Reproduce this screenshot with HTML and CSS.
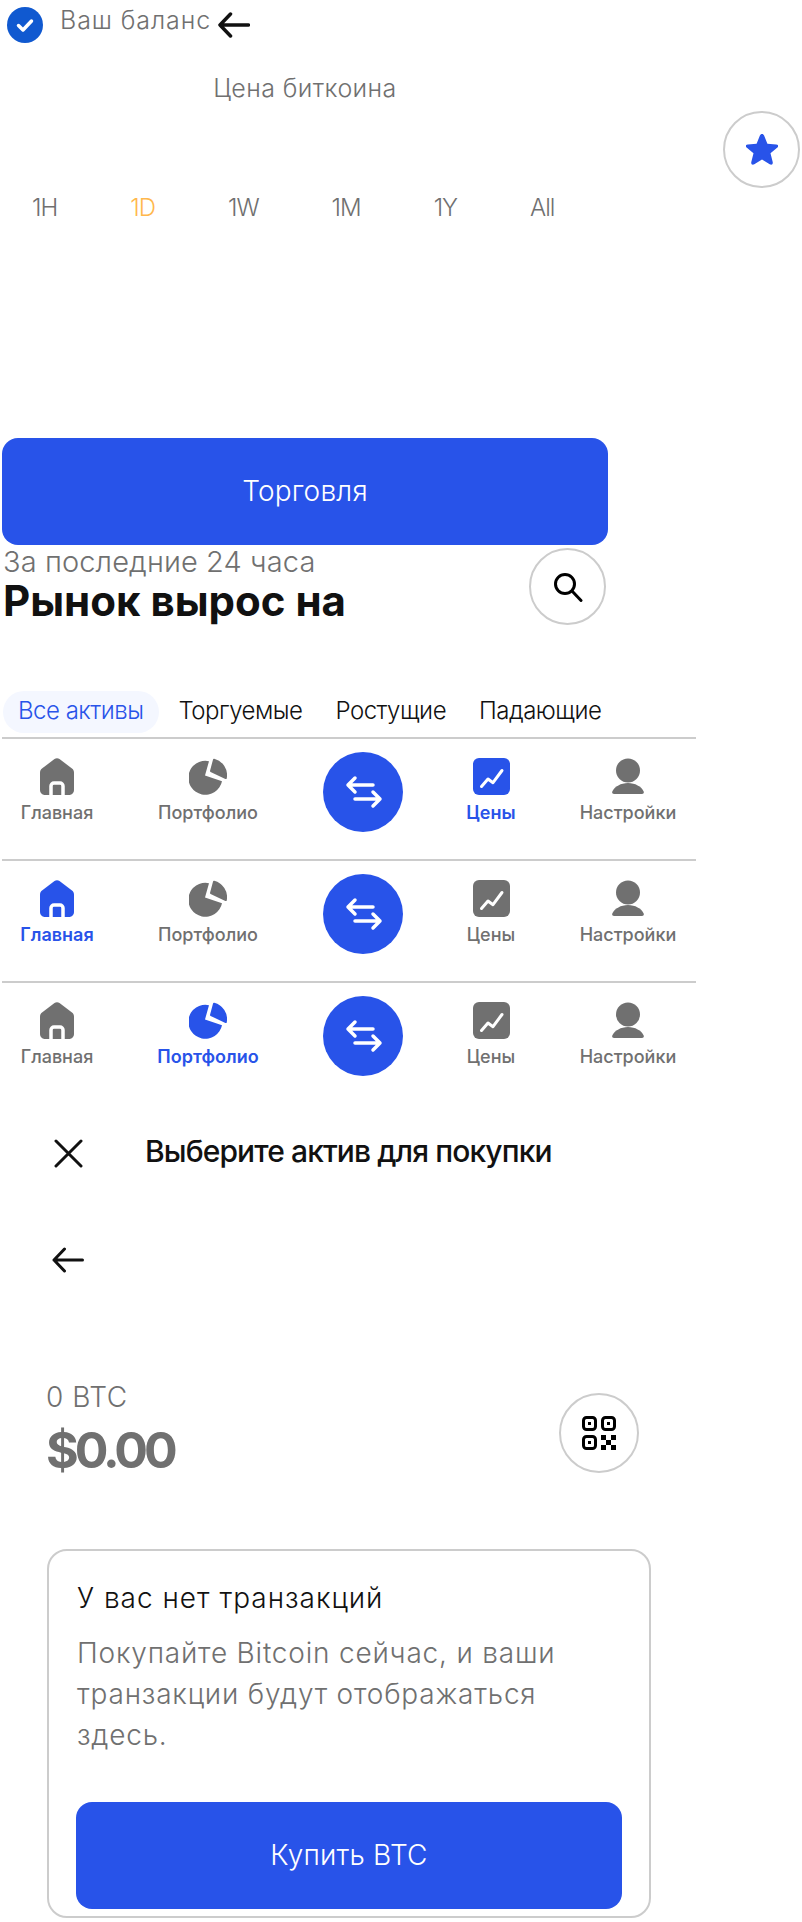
FILE: index.html
```html
<!DOCTYPE html>
<html lang="ru">

<head>
    <meta charset="UTF-8">
    <title>Цена биткоина</title>
    <link rel="stylesheet" href="styles.css">
</head>

<body>
    <svg class="sprite" width="0" height="0">
        <symbol id="i-home" viewBox="0 0 34 37">
            <path fill="currentColor" d="M14.5 1 2 10.5C.7 11.5 0 13 0 14.6V32c0 2.800 2.200 5 5 5h24c2.800 0 5-2.200 5-5V14.600c0-1.600-.7-3.100-2-4.100L19.500 1c-1.500-1.100-3.500-1.100-5 0z"/>
            <path fill="none" stroke="#fff" stroke-width="3.500" d="M11 37V28c0-1.700 1.300-3 3-3h6c1.700 0 3 1.300 3 3v9"/>
        </symbol>
        <symbol id="i-pie" viewBox="0 0 38 36">
            <path fill="currentColor" d="M20 2.700 16 17l17 5.700A17 17 0 1 1 20 2.700z"/>
            <path fill="currentColor" stroke="currentColor" stroke-width="2" stroke-linejoin="round" d="M22 12.500 25 1.200A16 16 0 0 1 36.800 19.500z"/>
        </symbol>
        <symbol id="i-chart" viewBox="0 0 37 37">
            <rect width="37" height="37" rx="6" fill="currentColor"/>
            <path fill="none" stroke="#fff" stroke-width="3" stroke-linecap="round" stroke-linejoin="round" d="M8.500 28.500 15 21l5 3.700L29 12.500"/>
        </symbol>
        <symbol id="i-user" viewBox="0 0 32 36">
            <circle cx="16" cy="12" r="12" fill="currentColor"/>
            <path fill="currentColor" d="M16 24.500c-7 0-13.500 3.500-15.700 8.500-.5 1.300.3 2.500 1.700 2.500h28c1.400 0 2.200-1.200 1.700-2.500C29.500 28 23 24.500 16 24.500z"/>
        </symbol>
        <symbol id="i-swap" viewBox="0 0 40 40">
            <path fill="none" stroke="#fff" stroke-width="3.500" stroke-linecap="round" stroke-linejoin="round" d="M30 13H5M12 6l-7 7 7 7M12 27h25M30 20l7 7-7 7"/>
        </symbol>
        <symbol id="i-arrow" viewBox="0 0 32 26">
            <path fill="none" stroke="currentColor" stroke-linecap="round" stroke-linejoin="round" d="M30.500 13H2M12.500 2 2 13l10.500 11"/>
        </symbol>
    </svg>

    <div class="balance">
        <svg class="check" viewBox="0 0 36 36">
            <circle cx="18" cy="18" r="18" fill="#1059d0"/>
            <path fill="none" stroke="#fff" stroke-width="3.500" stroke-linecap="round" stroke-linejoin="round" d="m11.500 18.500 4.500 4.500 8.500-9"/>
        </svg>
        <span class="balance-text">Ваш баланс</span>
        <svg class="arrow-top"><use href="#i-arrow"/></svg>
    </div>

    <div class="price-title">Цена биткоина</div>

    <div class="fav-row">
        <div class="round-btn">
            <svg class="star" viewBox="0 0 32 31">
                <path fill="#2853e9" d="M16 0c1 0 1.700.6 2.100 1.500l3.300 8.300 8.800.6c2.200.2 2.500 2 1.200 3.200l-6.900 5.700 2.200 8.700c.5 2.200-1.100 3.400-3 2.200L16 25.500l-7.700 4.700c-1.900 1.200-3.500 0-3-2.200l2.200-8.700L.6 13.600C-.7 12.400-.4 10.600 1.800 10.400l8.800-.6 3.300-8.300C14.300.6 15 0 16 0z"/>
            </svg>
        </div>
    </div>

    <div class="periods">
        <span>1H</span>
        <span class="on">1D</span>
        <span>1W</span>
        <span>1M</span>
        <span>1Y</span>
        <span>All</span>
    </div>

    <button class="main-btn trade">Торговля</button>

    <div class="market">
        <div>
            <div class="market-sub">За последние 24 часа</div>
            <div class="market-title">Рынок вырос на</div>
        </div>
        <div class="round-btn">
            <svg class="search" viewBox="0 0 30 30">
                <circle cx="12" cy="12" r="9.500" fill="none" stroke="#000" stroke-width="3"/>
                <path stroke="#000" stroke-width="3" stroke-linecap="round" d="m19 19 9 9.500"/>
            </svg>
        </div>
    </div>

    <div class="tabs">
        <span class="tab on">Все активы</span>
        <span class="tab">Торгуемые</span>
        <span class="tab">Ростущие</span>
        <span class="tab">Падающие</span>
    </div>

    <div class="nav">
        <div class="nav-item"><svg class="ic ic-home"><use href="#i-home"/></svg><span>Главная</span></div>
        <div class="nav-item"><svg class="ic ic-pie"><use href="#i-pie"/></svg><span>Портфолио</span></div>
        <div class="swap"><svg><use href="#i-swap"/></svg></div>
        <div class="nav-item on"><svg class="ic ic-chart"><use href="#i-chart"/></svg><span>Цены</span></div>
        <div class="nav-item"><svg class="ic ic-user"><use href="#i-user"/></svg><span>Настройки</span></div>
    </div>
    <div class="nav">
        <div class="nav-item on"><svg class="ic ic-home"><use href="#i-home"/></svg><span>Главная</span></div>
        <div class="nav-item"><svg class="ic ic-pie"><use href="#i-pie"/></svg><span>Портфолио</span></div>
        <div class="swap"><svg><use href="#i-swap"/></svg></div>
        <div class="nav-item"><svg class="ic ic-chart"><use href="#i-chart"/></svg><span>Цены</span></div>
        <div class="nav-item"><svg class="ic ic-user"><use href="#i-user"/></svg><span>Настройки</span></div>
    </div>
    <div class="nav">
        <div class="nav-item"><svg class="ic ic-home"><use href="#i-home"/></svg><span>Главная</span></div>
        <div class="nav-item on"><svg class="ic ic-pie"><use href="#i-pie"/></svg><span>Портфолио</span></div>
        <div class="swap"><svg><use href="#i-swap"/></svg></div>
        <div class="nav-item"><svg class="ic ic-chart"><use href="#i-chart"/></svg><span>Цены</span></div>
        <div class="nav-item"><svg class="ic ic-user"><use href="#i-user"/></svg><span>Настройки</span></div>
    </div>

    <div class="pick">
        <svg class="close" viewBox="0 0 29 29">
            <path stroke="#111" stroke-width="3" stroke-linecap="round" d="m2 2 25 25M27 2 2 27"/>
        </svg>
        <div class="pick-title">Выберите актив для покупки</div>
    </div>

    <svg class="arrow-back"><use href="#i-arrow"/></svg>

    <div class="wallet">
        <div>
            <div class="wallet-btc">0 BTC</div>
            <div class="wallet-usd">$0.00</div>
        </div>
        <div class="round-btn qr-btn">
            <svg class="qr" viewBox="0 0 34 34">
                <g fill="none" stroke="#000" stroke-width="3">
                    <rect x="1.500" y="1.500" width="12" height="12" rx="3"/>
                    <rect x="20.500" y="1.500" width="12" height="12" rx="3"/>
                    <rect x="1.500" y="20.500" width="12" height="12" rx="3"/>
                </g>
                <path d="M6 6h3v3H6zM25 6h3v3h-3zM6 25h3v3H6zM19 19h5v5h-5zM29 19h5v5h-5zM24 24h5v5h-5zM19 29h5v5h-5zM29 29h5v5h-5z"/>
            </svg>
        </div>
    </div>

    <div class="card">
        <div class="card-title">У вас нет транзакций</div>
        <p class="card-text">Покупайте Bitcoin сейчас, и ваши транзакции будут отображаться здесь.</p>
        <button class="main-btn buy">Купить BTC</button>
    </div>
</body>

</html>
```

FILE: styles.css
```css
body {
    margin: 0;
    padding-bottom: 4px;
    background: #fff;
    color: #707070;
    font-family: "Inter", "Liberation Sans", sans-serif;
    font-weight: 300;
}

.sprite {
    position: absolute;
}

.balance {
    display: flex;
    height: 50px;
    padding: 7px 0 0 7px;
    box-sizing: border-box;
}

.check {
    width: 36px;
    height: 36px;
}

.balance-text {
    margin: -6px 0 0 17px;
    font-size: 25px;
    letter-spacing: 0.9px;
    line-height: 38px;
}

.arrow-top {
    width: 32px;
    height: 26px;
    margin: 5px 0 0 7px;
    color: #111;
    stroke-width: 3.5px;
}

.price-title {
    width: 610px;
    margin-top: 22px;
    font-size: 25px;
    letter-spacing: 0.4px;
    line-height: 32px;
    text-align: center;
}

.fav-row {
    display: flex;
    justify-content: flex-end;
    margin-top: 7px;
    padding-right: 2px;
}

.round-btn {
    display: flex;
    align-items: center;
    justify-content: center;
    flex: none;
    width: 77px;
    height: 77px;
    box-sizing: border-box;
    border: 2px solid #ccc;
    border-radius: 50%;
}

.star {
    width: 32px;
    height: 31px;
}

.periods {
    display: flex;
    gap: 73px;
    margin-top: 5px;
    padding-left: 32px;
    font-size: 24px;
    letter-spacing: -1px;
    line-height: 30px;
}

.periods .on {
    color: #ffb84d;
}

.main-btn {
    display: block;
    height: 107px;
    padding: 0 0 2px;
    border: 0;
    border-radius: 16px;
    background: #2853e9;
    color: #fff;
    font-family: inherit;
    font-weight: 300;
    font-size: 28px;
    letter-spacing: 0.2px;
}

.trade {
    width: 606px;
    margin: 215px 0 0 2px;
}

.market {
    display: flex;
    justify-content: space-between;
    width: 603px;
    margin: 1px 0 0 3px;
}

.market-sub {
    margin-top: -1px;
    font-size: 29px;
    letter-spacing: 0.1px;
    line-height: 33px;
}

.market-title {
    color: #111;
    font-size: 42px;
    font-weight: 700;
    line-height: 46px;
}

.market .round-btn {
    margin-top: 2px;
}

.search {
    width: 30px;
    height: 30px;
}

.tabs {
    display: flex;
    align-items: center;
    height: 42px;
    margin: 66px 0 4px 3px;
    color: #111;
    font-size: 24px;
    letter-spacing: -0.5px;
}

.tab {
    margin-right: 33px;
    padding-bottom: 3px;
}

.tab.on {
    margin-right: 19px;
    padding: 0 16px 3px 15px;
    border-radius: 21px;
    background: #f4f7ff;
    color: #2853e9;
    line-height: 39px;
}

.nav {
    display: grid;
    grid-template-columns: 110px 192px 118px 138px 136px;
    width: 694px;
    height: 122px;
    margin-left: 2px;
    padding-top: 13px;
    box-sizing: border-box;
    border-top: 2px solid #ccc;
}

.nav-item {
    display: flex;
    flex-direction: column;
    align-items: center;
    padding-top: 6px;
    font-size: 18px;
    font-weight: 500;
    line-height: 20px;
}

.nav-item.on {
    color: #2853e9;
    font-weight: 600;
}

.ic {
    height: 37px;
    margin-bottom: 8px;
}

.ic-home {
    width: 34px;
}

.ic-pie {
    width: 38px;
}

.ic-chart {
    width: 37px;
}

.ic-user {
    width: 32px;
}

.swap {
    display: flex;
    align-items: center;
    justify-content: center;
    justify-self: center;
    width: 80px;
    height: 80px;
    border-radius: 50%;
    background: #2853e9;
}

.swap svg {
    width: 40px;
    height: 40px;
}

.pick {
    display: flex;
    align-items: center;
    gap: 62px;
    height: 36px;
    margin-top: 32px;
    padding-left: 54px;
}

.close {
    width: 29px;
    height: 29px;
}

.pick-title {
    margin-top: -4px;
    color: #111;
    font-size: 30px;
    font-weight: 500;
    letter-spacing: -0.9px;
    line-height: 36px;
}

.arrow-back {
    display: block;
    width: 32px;
    height: 26px;
    margin: 76px 0 0 52px;
    color: #111;
    stroke-width: 3px;
}

.wallet {
    display: flex;
    justify-content: space-between;
    width: 593px;
    margin: 106px 0 0 46px;
}

.wallet-btc {
    font-size: 28px;
    letter-spacing: 0.5px;
    line-height: 36px;
}

.wallet-usd {
    margin-top: 5px;
    font-size: 50px;
    font-weight: 700;
    letter-spacing: -4px;
    line-height: 60px;
}

.qr-btn {
    width: 80px;
    height: 80px;
    margin-top: 14px;
}

.qr {
    width: 34px;
    height: 34px;
}

.card {
    width: 604px;
    height: 369px;
    margin: 69px 0 0 47px;
    padding: 29px 27px 7px 28px;
    box-sizing: border-box;
    border: 2px solid #ccc;
    border-radius: 20px;
}

.card-title {
    color: #111;
    font-size: 28px;
    letter-spacing: 1px;
    line-height: 36px;
}

.card-text {
    margin: 17px 0 0;
    font-size: 28px;
    letter-spacing: 0.8px;
    line-height: 41px;
}

.buy {
    width: 546px;
    margin: 46px 0 0 -1px;
}
```
